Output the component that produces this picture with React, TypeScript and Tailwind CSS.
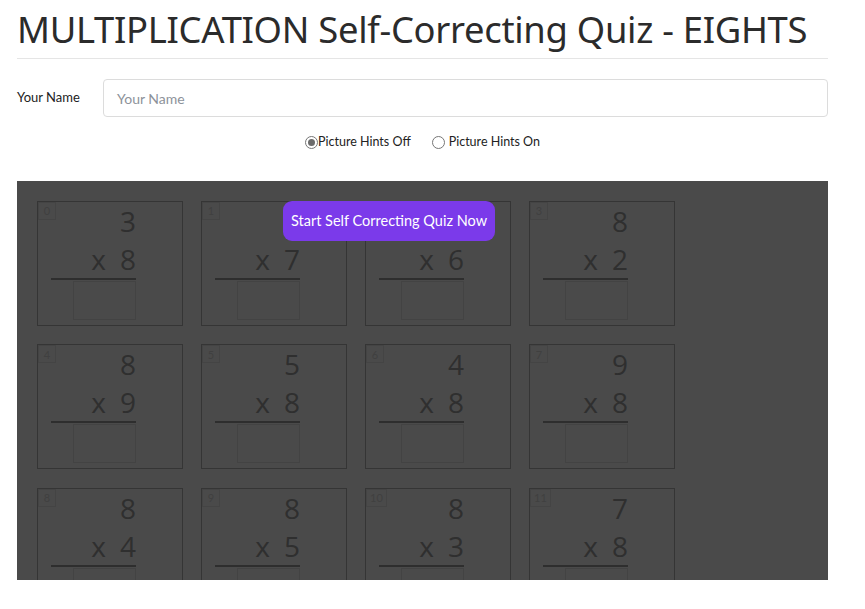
import React from "react";

const problems: [string, string][] = [
  ["3", "8"],
  ["", "7"],
  ["", "6"],
  ["8", "2"],
  ["8", "9"],
  ["5", "8"],
  ["4", "8"],
  ["9", "8"],
  ["8", "4"],
  ["8", "5"],
  ["8", "3"],
  ["7", "8"],
];

function Card({ idx, top, bottom }: { idx: number; top: string; bottom: string }) {
  return (
    <div className="relative h-[125px] w-[146px] border border-[#353535]">
      <div className="absolute left-0 top-0 flex h-[18px] min-w-[18px] items-center justify-center border border-[#444444] px-[3px] text-[11px] leading-none text-[#404040]">
        {idx}
      </div>
      <div
        className="ml-[13px] w-[85px] text-right text-[28px] text-[#2f2f2f]"
        style={{ fontFamily: "'Open Sans', sans-serif" }}
      >
        <div className="h-[38px] whitespace-pre leading-[38px]">{top}</div>
        <div className="flex h-[40px] items-start justify-end border-b-2 border-[#2e2e2e] leading-[38px]">
          <span>x</span>
          <span className="ml-[14px]">{bottom}</span>
        </div>
        <div className="ml-auto mt-[1px] h-[39px] w-[63px] border border-[#434343]" />
      </div>
    </div>
  );
}

export default function App() {
  return (
    <div className="min-h-[609px] w-[865px] bg-white" style={{ fontFamily: "Lato, 'Open Sans', sans-serif" }}>
      <div className="ml-[17px] w-[811px]">
        <h1
          className="pt-[6px] text-[36.4px] leading-[46px] tracking-[-0.3px] text-[#2b2b2b]"
          style={{ fontFamily: "'Noto Sans', sans-serif" }}
        >
          MULTIPLICATION Self-Correcting Quiz - EIGHTS
        </h1>
        <div className="mt-[6px] h-px w-full bg-[#e5e5e5]" />
        <div className="mt-[20px] flex items-center">
          <label className="w-[86px] text-[13px] text-[#222]">Your Name</label>
          <div className="flex h-[38px] flex-1 items-center rounded-[4px] border border-[#dcdcdc] px-[13px] text-[14px] text-[#8d929a]">
            Your Name
          </div>
        </div>
        <div className="mt-[16px] flex items-center justify-center text-[12.5px] text-[#222]">
          <span className="flex items-center">
            <span className="flex h-[13px] w-[13px] items-center justify-center rounded-full border border-[#767676]">
              <span className="h-[7px] w-[7px] rounded-full bg-[#6b6b6b]" />
            </span>
            <span>Picture Hints Off</span>
          </span>
          <span className="ml-[21px] flex items-center">
            <span className="mr-[4px] h-[13px] w-[13px] rounded-full border border-[#767676]" />
            <span>Picture Hints On</span>
          </span>
        </div>
        <div className="relative mt-[29px] h-[399px] overflow-hidden bg-[#4a4a4a] px-[20px] pt-[20px]">
          <div className="grid grid-cols-[146px_146px_146px_146px] gap-x-[18px] gap-y-[18.5px]">
            {problems.map((p, i) => (
              <Card key={i} idx={i} top={p[0]} bottom={p[1]} />
            ))}
          </div>
          <button
            className="absolute left-[266px] top-[20px] flex h-[40px] w-[212px] items-center justify-center rounded-[9px] bg-[#7b3aea] text-[14.5px] text-white"
            style={{ fontFamily: "Lato, 'Open Sans', sans-serif" }}
          >
            Start Self Correcting Quiz Now
          </button>
        </div>
      </div>
    </div>
  );
}
